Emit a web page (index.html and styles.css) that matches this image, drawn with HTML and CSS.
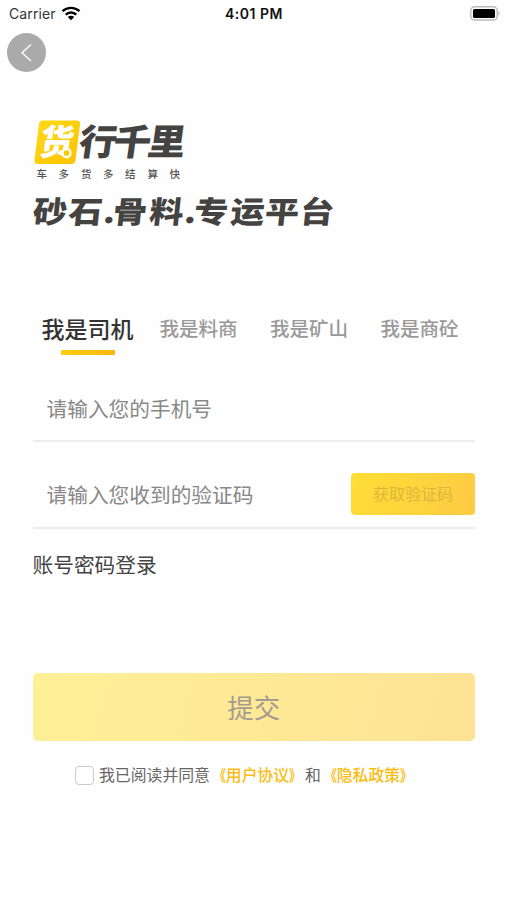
FILE: index.html
```html
<!DOCTYPE html>
<html lang="zh-CN">
<head>
<meta charset="utf-8">
<title>货行千里</title>
<link rel="stylesheet" href="styles.css">
</head>
<body>
<header class="status">
  <div class="carrier">Carrier
    <svg width="20" height="15" viewBox="0 0 20 15"><g fill="none" stroke="#000" stroke-width="2.4"><path d="M1.5 5.2C6.4.7 13.600.7 18.500 5.200"/><path d="M4.700 8.600C7.700 5.700 12.300 5.700 15.300 8.600"/></g><path d="M6.800 11C8.700 9.300 11.300 9.300 13.200 11L10 14.200Z"/></svg>
  </div>
  <time class="clock">4:01 PM</time>
  <svg class="battery" width="31" height="15" viewBox="0 0 31 15"><rect x=".8" y=".8" width="26.400" height="13.200" rx="3.800" fill="#fff" stroke="#bbb" stroke-width="1.400"/><rect x="3" y="3" width="22" height="8.900" rx="1.500"/><path d="M28.500 5q2.200 2.400 0 4.800z" fill="#aaa"/></svg>
</header>
<button class="back" aria-label="返回"><svg width="39" height="39" viewBox="0 0 39 39"><path d="M24 11.500L15 19.700L24 28" fill="none" stroke="#fff" stroke-width="1.400"/></svg></button>
<main class="page">
  <svg class="brand" width="310" height="120" viewBox="0 0 310 120">
    <defs><linearGradient id="gold" x1="0" y1="0" x2="1" y2="1"><stop offset="0" stop-color="#ffda18"/><stop offset="1" stop-color="#fcc200"/></linearGradient></defs>
    <path d="M9.500 5.500H43.500Q47.500 5.500 47 9.500L42.500 45Q42 49 38.500 49H5Q1 49 1.500 45L6 9Q6.500 5.500 9.500 5.500Z" fill="url(#gold)"/>
    <text class="heavy mark" transform="translate(5.500 39.500) skewX(-7) scale(1 1.040)">货</text>
    <circle cx="33.500" cy="38" r="4" fill="#fdc900" stroke="#fff" stroke-width="2.300"/>
    <text class="heavy name" transform="translate(44.500 40) skewX(-8) scale(1.020 .970)" x="0 33.500 67.500" y="0">行千里</text>
    <text class="motto" x="3.500 25.500 48 70 92 114.500 136.500" y="62.500">车多货多结算快</text>
    <text class="heavy slogan" transform="translate(-.5 107.500) skewX(-6) scale(1 .89)" x="-.5 35 70 79.500 116 151 160.500 197 231.500 266.500" y="0">砂石.骨料.专运平台</text>
  </svg>
  <nav class="tabs">
    <a class="tab active">我是司机</a><a class="tab">我是料商</a><a class="tab">我是矿山</a><a class="tab">我是商砼</a>
  </nav>
  <div class="field phone">请输入您的手机号</div>
  <div class="field code"><span>请输入您收到的验证码</span><button class="get-code">获取验证码</button></div>
  <a class="switch">账号密码登录</a>
  <button class="submit">提交</button>
  <div class="agree"><i class="box"></i><span>我已阅读并同意<b><i class="open">《</i>用户协议<i class="close">》</i></b>和<b><i class="open">《</i>隐私政策<i class="close">》</i></b></span></div>
</main>
</body>
</html>
```

FILE: styles.css
```css
* { box-sizing: border-box; }
body { margin: 0; height: 900px; background: #fefefe; color: #333; font-family: "Noto Sans CJK SC", sans-serif; overflow: hidden; }
button { border: 0; padding: 0; font-family: inherit; }
svg { display: block; }
i { font-style: normal; }
.status { display: grid; grid-template-columns: 1fr auto 1fr; align-items: center; height: 27px; padding: 0 6px 0 9px; font-family: Inter, sans-serif; font-size: 14px; color: #111; }
.carrier { display: flex; align-items: center; gap: 5px; color: #333; letter-spacing: .1px; }
.clock { font-weight: 600; letter-spacing: .5px; margin-left: -2px; }
.battery { justify-self: end; }
.back { display: block; width: 39px; height: 39px; margin: 6px 0 0 6.500px; border-radius: 50%; background: #aaa; }
.page { display: flex; flex-direction: column; padding: 43px 32px 0 32.500px; }
.brand { overflow: visible; }
.heavy { font-weight: 900; fill: #444341; }
.mark { font-size: 34px; fill: #fff; }
.name { font-size: 37px; }
.motto { font-size: 10.5px; font-weight: 500; fill: #555; }
.slogan { font-size: 34px; }
.tabs { display: flex; height: 61px; margin-top: 76px; padding-left: 9px; align-items: flex-start; }
.tab { font-size: 19.5px; line-height: 34px; font-weight: 500; color: #999; width: 78px; margin-right: 32.500px; white-space: nowrap; }
.tab:last-child { margin-right: 0; }
.tab.active { width: 92px; margin-right: 26px; font-size: 23px; color: #333; }
.tab.active::after { content: ""; display: block; width: 54px; height: 5px; margin: 5px auto 0; border-radius: 1px; background: linear-gradient(90deg, #fdcf0c, #fdb511); }
.field { display: flex; align-items: center; justify-content: space-between; border-bottom: 2px solid #ededed; padding-left: 14px; font-size: 20.700px; color: #888; }
.phone { height: 70px; padding-top: 3px; }
.code { height: 87px; padding-top: 19px; }
.get-code { width: 124px; height: 42px; border-radius: 4px; background: linear-gradient(110deg, #fede35, #fecb44); color: #dab63e; font-size: 16px; line-height: 40px; padding-bottom: 2px; }
.switch { margin-top: 20px; font-size: 20.700px; line-height: 30px; color: #444; }
.submit { height: 68px; margin-top: 94px; padding-bottom: 2px; border-radius: 5px; background: linear-gradient(105deg, #fef096, #fee295); color: #a69a91; font-size: 26.500px; }
.agree { display: flex; align-items: center; gap: 5.500px; margin: 22px 0 0 42px; font-size: 15.850px; line-height: 24px; color: #666; white-space: nowrap; }
.agree b { color: #f9bd13; font-weight: 500; }
.open, .close { display: inline-block; font-weight: 700; transform: scaleX(.75); }
.open { transform-origin: right; }
.close { transform-origin: left; }
.box { width: 19px; height: 19px; border: 1.500px solid #ccc; border-radius: 4px; }
```
